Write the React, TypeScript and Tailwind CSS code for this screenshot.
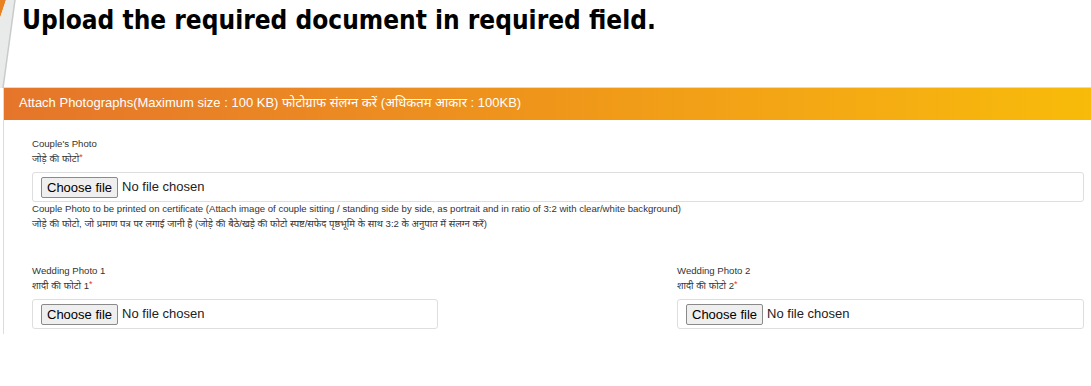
import React from "react";

const sans = { fontFamily: '"Liberation Sans", Arial, "Noto Sans", sans-serif' };

function Corner() {
  return (
    <svg className="absolute left-0 top-0" width="20" height="90" viewBox="0 0 20 90">
      <polygon points="0,0 6,0 0,18" fill="#e8811f" />
      <polygon points="6,0 15,0 3,88 0,88 0,18" fill="#e9eaea" />
      <line x1="15" y1="0" x2="3" y2="88" stroke="#c9caca" strokeWidth="1.5" />
    </svg>
  );
}

function Label({ en, hi }: { en: string; hi: string }) {
  return (
    <div className="mb-[5px] text-[9.6px] text-[#333]">
      <div className="leading-[15px]">{en}</div>
      <div className="leading-[15px]">
        {hi}
        <span className="relative -top-[2px] text-[9px] text-[#e53935]">*</span>
      </div>
    </div>
  );
}

function FileBox() {
  return (
    <label className="flex h-[30px] items-center rounded-[3px] border border-[#dedede] bg-white px-[8px] text-[13px]">
      <span className="mr-[4px] rounded-[2px] border border-[#8a8a8a] bg-[#efefef] px-[5px] py-[1px] leading-[17px] text-black">
        Choose file
      </span>
      <span className="text-[#222]">No file chosen</span>
      <input type="file" className="hidden" />
    </label>
  );
}

export default function App() {
  return (
    <div className="relative h-[386px] w-full overflow-hidden bg-white" style={sans}>
      <Corner />
      <h1
        className="pl-[22px] pt-[4px] text-[26px] font-bold leading-[32px] text-black"
        style={{ fontFamily: '"DejaVu Sans Condensed", "DejaVu Sans", sans-serif', fontStretch: "condensed" }}
      >
        Upload the required document in required field.
      </h1>

      <div className="ml-[3px] mt-[51px] border-l border-[#dcdcdc]">
        <div className="flex h-[33px] items-center border-t border-[#dcdcdc] bg-gradient-to-r from-[#e5752a] via-[#ef961a] to-[#f8bb09] pb-[2px] pl-[15px] text-[13px] text-white">
          Attach Photographs(Maximum size : 100 KB) फोटोग्राफ संलग्न करें (अधिकतम आकार : 100KB)
        </div>

        <div className="pb-[5px] pl-[28px] pr-[7px] pt-[16px]">
          <Label en="Couple's Photo" hi="जोड़े की फोटो" />
          <FileBox />
          <div className="-mt-[1px] text-[9.6px] leading-[15px] text-[#333]">
            <div>
              Couple Photo to be printed on certificate (Attach image of couple sitting / standing side by side, as
              portrait and in ratio of 3:2 with clear/white background)
            </div>
            <div>
              जोड़े की फोटो, जो प्रमाण पत्र पर लगाई जानी है (जोड़े की बैठे/खड़े की फोटो स्पष्ट/सफेद पृष्ठभूमि के साथ 3:2 के
              अनुपात में संलग्न करें)
            </div>
          </div>

          <div className="mt-[32px] flex justify-between">
            <div className="w-[406px]">
              <Label en="Wedding Photo 1" hi="शादी की फोटो 1" />
              <FileBox />
            </div>
            <div className="w-[407px]">
              <Label en="Wedding Photo 2" hi="शादी की फोटो 2" />
              <FileBox />
            </div>
          </div>
        </div>
      </div>
    </div>
  );
}
